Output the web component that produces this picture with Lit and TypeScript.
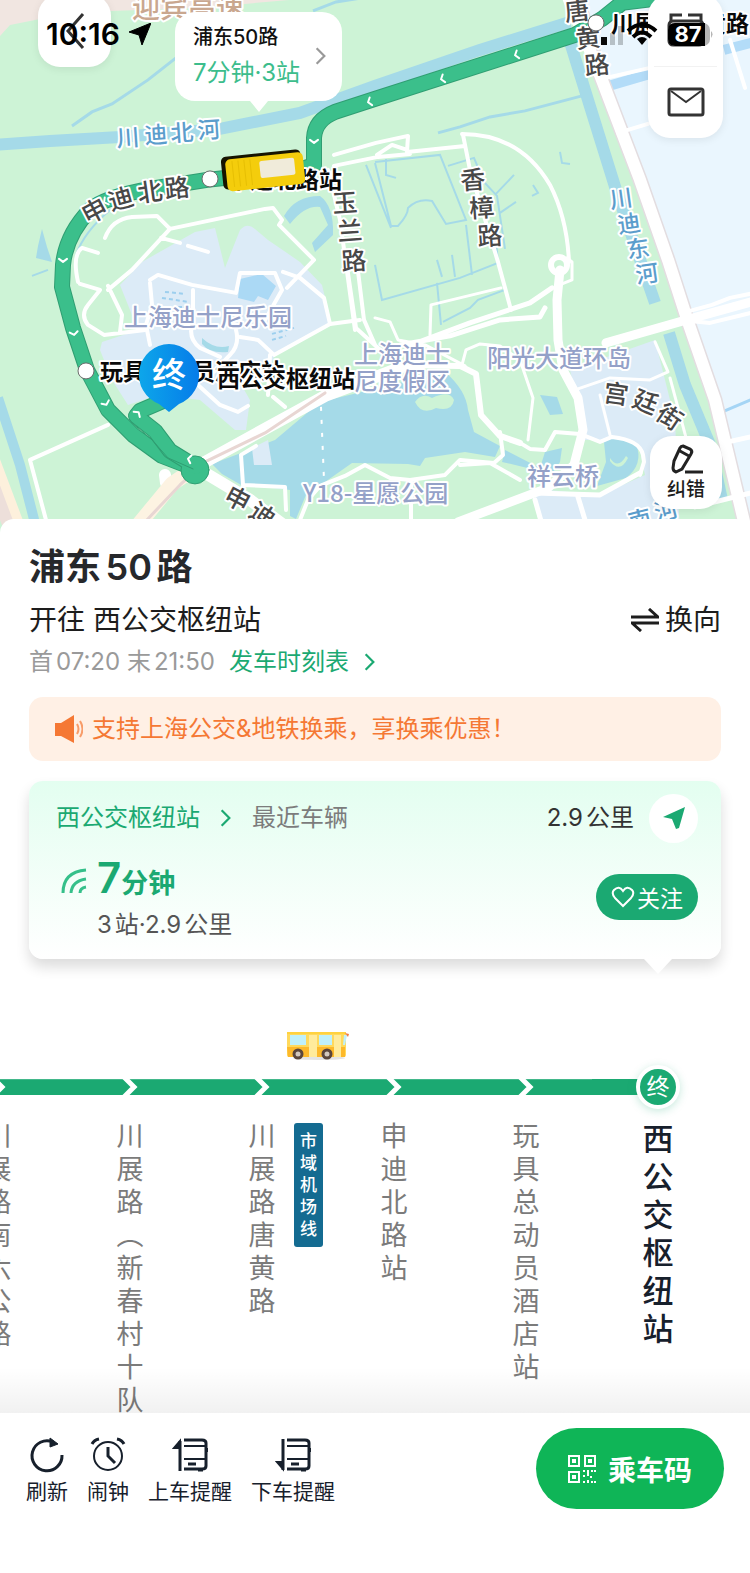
import { LitElement, html, svg, css } from "lit";
import { customElement, property } from "lit/decorators.js";

type Glyph = [string, number, number, number];

const streetGlyphs: Glyph[] = [
  ["申", 95, 212, -28], ["迪", 121, 200, -16], ["北", 150, 193, -8], ["路", 177, 189, -6],
  ["玉", 345, 204, -4], ["兰", 350, 232, -4], ["路", 354, 262, -4],
  ["香", 473, 181, -4], ["樟", 482, 209, -4], ["路", 490, 237, -4],
  ["唐", 577, 12, -6], ["黄", 588, 39, -6], ["路", 597, 66, -6],
  ["宫", 616, 395, 8], ["廷", 645, 403, 22], ["街", 669, 418, 34],
  ["申", 237, 500, 28], ["迪", 262, 516, 34],
];

const riverGlyphs: Glyph[] = [
  ["川", 128, 138, -4], ["迪", 156, 135, -4], ["北", 182, 133, -4], ["河", 209, 130, -4],
  ["川", 621, 199, -8], ["迪", 629, 224, -8], ["东", 638, 249, -8], ["河", 647, 274, -8],
  ["南", 640, 520, -14], ["河", 666, 511, -14],
];

const arrows: [number, number, number][] = [
  [442, 79, 72], [516, 55, 72], [369, 102, 72], [314, 142, 0], [63, 261, 0],
  [74, 334, -10], [106, 404, -25], [138, 413, 220], [189, 459, 100], [105, 202, 60],
];

const glyphs = (list: Glyph[], cls: string) =>
  list.map(([ch, x, y, r]) => svg`<text class=${cls} transform="translate(${x} ${y}) rotate(${r})" dy="8">${ch}</text>`);

const chevron = (w: number, h: number) => html`
  <svg class="chevron" width=${w} height=${h} viewBox="0 0 10 16" fill="none" stroke="currentColor" stroke-width="2"><path d="M1.5 1 8.5 8l-7 7" /></svg>`;

@customElement("route-map")
class RouteMap extends LitElement {
  static styles = css`
    :host { display: block; height: 100%; }
    svg { display: block; width: 100%; height: 100%; }
    text { font-family: "Noto Sans CJK SC", sans-serif; paint-order: stroke; stroke: #fff; stroke-width: 4px; stroke-linejoin: round; }
    .street { font-size: 25px; font-weight: 500; fill: #484848; text-anchor: middle; }
    .river { font-size: 23px; font-weight: 500; fill: #5b9dcc; text-anchor: middle; }
    .place { font-size: 24px; font-weight: 500; fill: #94a1c8; }
    .highway { font-size: 28px; font-weight: 500; fill: #c9a78f; }
    .stop { font-size: 23px; font-weight: 700; fill: #0a0a0a; }
    .end { font-size: 34px; font-weight: 500; fill: #fff; stroke: none; text-anchor: middle; }
    .water { fill: #a5dae8; }
    .stream { fill: none; stroke: #a5dae8; stroke-width: 2; }
    .land { fill: #cdf3d6; }
    .park { fill: #dcebf7; }
    .road { fill: none; stroke: #fff; stroke-linejoin: round; stroke-linecap: round; }
    .arrow { fill: none; stroke: #fff; stroke-width: 2; }
  `;

  render() {
    const route = "M760-14 622 3 602 19 575 35 375 99 335 112Q315 120 314 138V165L300 170 207 180 150 189Q105 197 90 210 66 235 63 265L62 287 73 328 87 370 108 410 133 435 162 456 193 468";
    const back = "M196 467 170 451 155 431 136 416 140 411 168 399";
    return html`<svg viewBox="0 0 750 535" preserveAspectRatio="xMidYMid slice" role="img" aria-label="浦东50路线路地图">
      <defs>
        <linearGradient id="pin" x1="0" x2="1"><stop offset="0" stop-color="#0da6ea" /><stop offset="1" stop-color="#067ce9" /></linearGradient>
      </defs>
      <rect class="land" width="750" height="535" />
      <path fill="#f1e6e1" d="M0 0H290L200 8 110 11 40 19 10 25 0 36Z" />
      <path fill="#eaf6fe" d="M585 0H750V535L668 258 597 80Z" />
      <path class="park" d="M120 285 142 262 195 232 215 228 225 268 240 230Q247 222 255 229L268 240 300 262 322 285 331 322 322 330 276 352 268 372 242 386 250 400 246 430 235 430 200 400 158 395 128 405 112 380 100 350 102 342 138 330Z" />
      <path class="park" d="M570 370 655 340 675 420 680 535H540L535 495 575 470 583 430Z" />
      <path class="land" d="M560 440 600 440 640 450 645 475 600 495 548 490Z" />

      <path class="water" d="M212 464 275 440 320 402 370 390 445 372Q466 390 468 410L474 432 500 446 495 457 465 452 425 458 420 466 408 464 352 463 325 482 308 490 296 519 290 516V490L250 485 243 486 222 474Z" />
      <path class="park" d="M252 448 268 440 272 465H254Z" />
      <path class="land" d="M415 402Q422 392 432 398 450 390 454 400 452 412 436 408 422 416 415 402Z" />
      <path class="water" d="M505 450 540 468 545 452 562 448 560 462 552 474 502 462Z" />
      <path class="water" d="M540 395 557 397 563 414 550 415Z" />
      <path class="water" d="M604 442Q620 432 636 444 644 464 626 478L597 486 606 462Z" />
      <path class="land" d="M610 458Q618 470 626 456L628 458Q620 474 610 461Z" />
      <path class="water" d="M284 216Q295 196 320 196 334 206 333 235L315 252 312 243 328 225 320 207Q305 205 290 224Z" />
      <path fill="#abd9f5" d="M240 279 262 274 276 286 268 300 258 296 254 302 238 298Z" />
      <path class="water" d="M202 338Q215 350 229 346L228 352Q210 354 202 344Z" />
      <path class="water" d="M42 229 47 247 52 262 36 258 38 246Z" />
      <path fill="none" stroke="#9dcfee" stroke-dasharray="4 3" stroke-width="2" d="M165 292 185 294M162 298 188 302M178 307H186M272 334 294 328M272 340 286 336" />

      <path fill="none" stroke="#a5dae8" stroke-width="12" d="M-5 145 50 141 120 137 220 129 300 113 375 86 480 50 570 22" />
      <path fill="none" stroke="#a5dae8" stroke-width="12" d="M570 42 588 100 616 190 655 303M669 333 685 385 710 445 722 500" />
      <path fill="none" stroke="#a5dae8" stroke-width="10" d="M-2 398 20 465 38 535" />
      <path fill="none" stroke="#b3dcf8" stroke-width="10" d="M609 86 650 74M724 50 755 42" />
      <path fill="none" stroke="#a5d5f5" stroke-width="3" d="M720 413 755 398" />
      <g class="stream">
        <path d="M72 126 92 112 112 104 148 80 176 58" stroke-width="3" /><path d="M313 11 336 2 362 -2" stroke-width="3" />
        <path d="M438 133 460 127 490 117 525 111 582 96" stroke-width="3" />
        <path d="M375 163 391 226 398 226Q408 215 408 208 418 198 432 201L446 224 466 220 440 155 375 162M448 166 474 158 484 182 497 196 505 249M495 195 514 175M500 213 516 202M366 165 391 228" />
        <path d="M375 265 382 300 460 278 498 263 495 230M437 283 441 325M443 322 470 308 478 300 505 290M437 260 442 277M452 255 455 277M466 225 472 275M386 159V175L396 178" />
        <path d="M560 152 562 163 570 164M533 185 538 193 532 196M32 276 48 270M76 255Q84 232 110 210" />
      </g>

      <path fill="none" stroke="#e3dde0" stroke-width="15" d="M572-20 600 75 640 180 668 260 688 322 715 400 746 530" />
      <g class="road">
        <path stroke-width="12" d="M565-10 600 75 640 180 668 260 688 322 715 400 746 530" />
        <path stroke-width="9" d="M606 343 690 319 755 301M560 270 557 300 558 340 563 370 578 398 583 430 574 465 548 488 458 522" />
        <path stroke-width="4" d="M690 311 712 305 730 298 755 293M690 321 710 323 755 312M618 133 648 124M606 78 650 68M730 40 745 88" />
        <path stroke-width="5" d="M535 493 600 495 640 473M695 507 755 492M535 500 545 535M578 497 585 520M728 442 755 436" />
        <circle cx="559" cy="265" r="8" stroke-width="6" /><path stroke-width="3" d="M567 258 572 262V280L562 284" />
        <path stroke-width="4" d="M334 155 376 143 408 136 407 152 465 146M334 166 378 157 410 154M377 155 392 145 407 150M462 134Q520 134 550 185 567 218 569 262M463 135 470 170 498 262 511 310M328 170 340 220 355 330" />
        <path stroke-width="5" d="M422 341 470 323 530 303 552 288M400 345 450 336 500 320 540 317 545 308" />
        <path stroke-width="3" d="M430 335 431 305 501 288M375 318 390 322 398 340 425 345 465 366M462 365 466 350 480 344 500 346 520 360 533 398 528 440" />
        <path stroke-width="6" d="M400 365 460 366 476 374 481 415 500 436 520 443" />
        <path stroke-width="4" d="M500 432 503 455 494 463 460 460 445 475 410 480 390 478 365 465 345 476 320 486 308 500 300 520M520 443 530 449 545 450 555 432 580 434 600 442 612 437Q640 440 643 455L644 462 640 475M460 465 490 463 520 480M411 482V535" />
        <path stroke-width="3" d="M575 390 610 378 650 380 668 372 655 342M600 395 610 435M670 378 700 490" />
        <path stroke-width="4" d="M105 238Q112 219 132 217L157 216 170 229 265 209 273 208 282 220 279 225 314 260M170 229 132 270 108 290M161 238 180 243M188 246 208 252M108 286 122 315 120 332M78 282Q72 255 82 248L98 253M80 284 100 290 88 305Q80 315 88 325L104 335 145 330M314 260 287 288M283 272 300 278 324 298 330 324M312 160 325 175" />
        <path stroke-width="4" d="M150 280 158 275 192 285 236 293 240 273 275 273 282 290 265 320M150 283 152 305 146 325 150 345M193 290V322Q187 338 200 348L220 357M236 330Q240 345 230 355L214 372M240 337 258 340 274 355 330 324 360 320M270 355 268 395 M198 385 220 405 238 412 248 406M273 397 285 407" />
        <path stroke-width="4" d="M346 260 356 328 400 368M356 255 364 320 375 345M30 460 108 425M30 460 50 535M243 485 241 455 256 446M243 485 285 487 286 510" />
        <path stroke-width="12" d="M205 462 325 396 400 368M165 475 166 483M200 470 250 500 290 530" />
        <path stroke="#fdf3e2" stroke-width="15" d="M130 535 172 484 200 465" />
        <path stroke="#e8d6d3" stroke-width="3" d="M145 522 180 485 205 462 265 433 325 393" />
        <path stroke="#fdf0dc" stroke-width="12" d="M-8 455 22 535" /><path stroke="#eddfda" stroke-width="12" d="M-16 460 12 535" />
        <path stroke-width="2" stroke-dasharray="4 9" stroke-linecap="butt" d="M321 407 324 480" />
      </g>

      <text class="highway" x="132" y="18">迎宾高速</text>
      <g class="road">
        <path stroke="#2f9e72" stroke-width="16" d=${route} /><path stroke="#3bbf8b" stroke-width="14" d=${route} />
        <path stroke="#2f9e72" stroke-width="16" d=${back} /><circle cx="195" cy="470" r="14" fill="#3bbf8b" stroke="#2f9e72" />
        <path stroke="#3bbf8b" stroke-width="14" d=${back} />
        <path stroke="#2f9e72" stroke-width="1" d="M131 422 152 440 168 458 193 469" />
        ${arrows.map(([x, y, r]) => svg`<path class="arrow" transform="translate(${x} ${y}) rotate(${r})" d="M-4-2 0 1 4-2" />`)}
      </g>

      ${glyphs(riverGlyphs, "river")} ${glyphs(streetGlyphs, "street")}
      <text class="place" x="124" y="326">上海迪士尼乐园</text>
      <text class="place" x="354" y="363">上海迪士</text>
      <text class="place" x="354" y="390">尼度假区</text>
      <text class="place" x="487" y="367">阳光大道环岛</text>
      <text class="place" x="527" y="485">祥云桥</text>
      <text class="place" x="303" y="502">Y18-星愿公园</text>

      <g fill="#fff" stroke="#6b6b6b" stroke-width="1">
        <circle cx="210" cy="179" r="8" /><circle cx="86" cy="371" r="8" /><circle cx="596" cy="23" r="8" />
      </g>
      <text class="stop" x="227" y="188">申迪北路站</text>
      <text class="stop" x="611" y="32">川展路唐黄路</text>
      <text class="stop" x="100" y="380">玩具总动员酒店站</text>
      <text class="stop" x="217" y="387">西公交枢纽站</text>

      <g transform="translate(263 170) rotate(-6)">
        <rect x="-41" y="-17" width="80" height="33" rx="5" fill="#161300" />
        <rect x="-37" y="-14" width="78" height="32" rx="5" fill="#f4cd0c" />
        <path stroke="#e6bf04" stroke-width="1" d="M-30-12V14M-24-12V14M-18-12V14M-12-12V14" />
        <rect x="-3" y="-9" width="35" height="17" rx="2" fill="#f0ebda" />
      </g>
      <path fill="url(#pin)" d="M169 344A31 31 0 0 1 179 404L169 412 159 404A31 31 0 0 1 169 344Z" />
      <text class="end" x="169" y="387">终</text>
    </svg>`;
  }
}

@customElement("station-stop")
class StationStop extends LitElement {
  @property() name = "";
  @property() line = "";
  @property({ type: Boolean }) terminal = false;
  @property({ type: Boolean }) bus = false;

  static styles = css`
    :host { position: relative; display: flex; flex: 0 0 132px; flex-direction: column; align-items: center; }
    .track { display: flex; align-items: center; justify-content: center; width: 100%; height: 16px; background: #1ba972; border-top: 1px solid #43b88b; box-sizing: border-box; }
    .mark { display: block; overflow: visible; }
    .track.terminal { background: linear-gradient(90deg, #1ba972 50%, transparent 50%); border-color: transparent; }
    .end { flex: none; width: 36px; height: 36px; border: 4px solid #fff; border-radius: 50%; background: #1ba972; color: #fff; font-size: 23px; line-height: 36px; text-align: center; box-shadow: 0 2px 8px #1ba97240; }
    .name { width: 28px; margin-top: 25px; font-size: 27px; line-height: 33px; color: #7b7b7b; line-break: anywhere; word-break: break-all; text-align: center; }
    .name.terminal { width: 32px; font-size: 31px; line-height: 38px; font-weight: 500; color: #17202c; }
    .line { position: absolute; top: 44px; left: 98px; box-sizing: border-box; width: 29px; padding: 7px 6px; border-radius: 3px; background: #146b91; color: #fff; font-size: 17px; line-height: 22px; font-weight: 500; line-break: anywhere; }
    .bus { position: absolute; top: -48px; left: 89px; }
  `;

  render() {
    const t = this.terminal ? "terminal" : "";
    return html`
      ${this.bus ? html`<svg class="bus" width="64" height="30" viewBox="0 0 64 30" aria-label="车辆位置">
        <ellipse cx="34" cy="27" rx="26" ry="2" fill="#e4e4e4" />
        <rect x="2" y="1" width="59" height="25" rx="2" fill="#ffd95c" /><path fill="#fdb92b" d="M2 16H60V26H3Z" />
        <path fill="#ffd23f" d="M2 1H61V3H2Z" />
        <path fill="#bff0fb" d="M5 4H21V14H5ZM34 4H47V14H34ZM59 4H62L60 14H58Z" />
        <path fill="#ffeb9c" d="M24 4H32V26H24ZM49 4H56V26H49Z" /><path fill="#f17a45" d="M60 2 64 3 63 6Z" />
        <g fill="#d3c8be" stroke="#5a463c" stroke-width="3"><circle cx="13" cy="23" r="4" /><circle cx="42" cy="23" r="4" /></g>
      </svg>` : ""}
      <div class="track ${t}">
        ${this.terminal ? html`<span class="end">终</span>` : html`<svg class="mark" width="18" height="16" viewBox="0 0 18 16" fill="none" stroke="#fff" stroke-width="5"><path d="M3-2 13 8 3 18" /></svg>`}
      </div>
      <div class="name ${t}">${this.name}</div>
      ${this.line ? html`<span class="line">${this.line}</span>` : ""}
    `;
  }
}

@customElement("app-root")
class AppRoot extends LitElement {
  static styles = css`
    :host { display: flex; flex-direction: column; height: 100vh; overflow: hidden; background: #fff; color: #1d1d1d; font-family: Inter, "Noto Sans CJK SC", sans-serif; text-autospace: normal; }
    button { padding: 0; border: 0; background: none; color: inherit; font: inherit; cursor: pointer; }
    a { color: inherit; text-decoration: none; }
    h1, p { margin: 0; }
    svg { display: block; flex: none; }

    .map { position: relative; flex: 0 0 34vh; overflow: hidden; }
    .float { position: absolute; display: flex; flex-direction: column; align-items: center; justify-content: center; background: #fff; border-radius: 22px; box-shadow: 0 2px 8px #00000014; }
    .back { top: -6px; left: 38px; width: 73px; height: 73px; }
    .tools { top: -6px; right: 27px; width: 75px; height: 144px; }
    .tools button { display: flex; flex: 1; align-items: center; justify-content: center; align-self: stretch; }
    .tools button + button { margin: 0 6px; border-top: 1px solid #f2f2f2; }
    .report { top: 436px; right: 28px; width: 72px; height: 73px; gap: 3px; font-size: 19px; line-height: 24px; font-weight: 500; }
    .bubble { position: absolute; top: 12px; left: 175px; display: flex; align-items: center; gap: 15px; padding: 8px 16px 10px 18px; border-radius: 20px; background: #fff; text-autospace: no-autospace; }
    .bubble::after, .card::after { content: ""; position: absolute; border: solid transparent; border-bottom: 0; border-top-color: #fff; }
    .bubble::after { top: 100%; left: 50%; border-width: 11px 9px 0; margin-left: -9px; }
    .bubble-text { display: flex; flex-direction: column; text-align: left; }
    .bubble-name { font-size: 20px; line-height: 34px; font-weight: 500; color: #111; }
    .bubble-eta { font-size: 24px; line-height: 37px; color: #3cbd8c; }
    .bubble .chevron { color: #999; }
    .status { position: absolute; top: 18px; left: 46px; right: 37px; display: flex; align-items: center; gap: 9px; height: 32px; color: #000; pointer-events: none; }
    .clock { font-size: 30px; font-weight: 600; }
    .status .system { margin-left: auto; }
    .level { font-size: 22px; font-weight: 700; fill: #fff; text-anchor: middle; font-family: Inter, sans-serif; }

    .sheet { position: relative; display: flex; flex: 1; flex-direction: column; min-height: 0; margin-top: -16px; padding-top: 26px; border-radius: 14px 14px 0 0; background: #fff; box-sizing: border-box; }
    .head { padding: 0 29px; }
    .title { font-size: 36px; line-height: 44px; font-weight: 600; color: #26282b; }
    .row { display: flex; align-items: center; }
    .bound { justify-content: space-between; margin-top: 9px; font-size: 28px; line-height: 44px; }
    .swap { display: flex; align-items: center; gap: 6px; }
    .hours { gap: 14px; margin-top: 2px; font-size: 24px; line-height: 36px; color: #9a9a9a; }
    .timetable { display: flex; align-items: center; gap: 15px; color: #1ba972; }
    .notice { gap: 9px; margin-top: 17px; padding: 0 26px; border-radius: 14px; background: #fff0e5; color: #f57834; font-size: 24px; line-height: 64px; white-space: nowrap; }
    .card { position: relative; display: flex; flex: none; flex-direction: column; margin: 20px 29px 0; padding: 13px 23px 18px 27px; border-radius: 14px; background: linear-gradient(#e3fef0, #fff); box-shadow: 0 8px 14px #00000024; }
    .card::after { top: 100%; right: 49px; border-width: 15px 14px 0; }
    .nearest { font-size: 24px; line-height: 36px; color: #7c7c7c; }
    .target { display: flex; align-items: center; gap: 20px; margin-right: 21px; color: #1ba972; }
    .distance { margin-left: auto; color: #333; }
    .locate { display: flex; align-items: center; justify-content: center; width: 49px; height: 49px; margin-left: 15px; border-radius: 50%; background: #fff; }
    .arrival { justify-content: space-between; margin-top: 11px; }
    .eta { display: grid; grid-template-columns: 26px auto; align-items: center; column-gap: 10px; padding-left: 5px; }
    .minutes { font-size: 27px; line-height: 48px; font-weight: 600; color: #1ba972; text-autospace: no-autospace; }
    .number { font-size: 42px; }
    .detail { grid-column: 2; font-size: 24px; line-height: 33px; color: #555; }
    .follow { display: flex; align-items: center; justify-content: center; gap: 2px; width: 102px; height: 46px; border-radius: 23px; background: #1ba972; color: #fff; font-size: 23px; }
    .strip { position: relative; display: flex; flex: 1; justify-content: flex-end; min-height: 0; overflow: hidden; padding: 120px 26px 0 0; }
    .strip::after { content: ""; position: absolute; inset: auto 0 0; height: 46px; background: linear-gradient(#0000, #0000000e); pointer-events: none; }

    .bar { display: flex; flex: 0 0 160px; align-items: flex-start; gap: 19px; padding: 15px 26px 0; box-sizing: border-box; background: #fff; color: #17202c; }
    .action { display: flex; flex-direction: column; align-items: center; gap: 3px; margin-top: 9px; font-size: 21px; line-height: 32px; white-space: nowrap; }
    .pay { display: flex; align-items: center; justify-content: center; gap: 12px; width: 188px; height: 81px; margin-left: auto; border-radius: 41px; background: #0fb557; color: #fff; font-size: 28px; font-weight: 600; }
  `;

  private stops = [
    { name: "川展路南六公路" },
    { name: "川展路︵新春村十队" },
    { name: "川展路唐黄路", line: "市域机场线", bus: true },
    { name: "申迪北路站" },
    { name: "玩具总动员酒店站" },
    { name: "西公交枢纽站", terminal: true },
  ];

  private busIcon(up: boolean) {
    return html`<svg width="36" height="36" viewBox="0 0 36 36" fill="none" stroke="currentColor" stroke-width="2">
      ${up ? svg`<path d="M8 34V4" stroke-width="3" /><path fill="currentColor" d="M8 4V11H2Z" />` : svg`<path d="M8 2V33" stroke-width="3" /><path fill="currentColor" d="M8 32V25H2Z" />`}
      <path d="M12 3H30Q34 3 34 6V29Q34 32 30 32H12" stroke-width="3" /><path d="M12 9H33M12 22H33" /><path d="M16 27H24M26 33H31M35 11V15" stroke-width="3" />
    </svg>`;
  }

  render() {
    return html`
      <section class="map">
        <route-map></route-map>
        <button class="bubble">
          <span class="bubble-text"><span class="bubble-name">浦东50路</span><span class="bubble-eta">7分钟·3站</span></span>
          ${chevron(11, 18)}
        </button>
        <button class="float back" aria-label="返回">
          <svg width="20" height="40" viewBox="0 0 20 40" fill="none" stroke="#333" stroke-width="3"><path d="M18 3 3 20l15 17" /></svg>
        </button>
        <div class="float tools">
          <button aria-label="公交卡"><svg width="38" height="34" viewBox="0 0 38 34" fill="none" stroke="#333" stroke-width="3"><rect x="2" y="8" width="34" height="24" rx="4" /><path d="M4 8V2H15M21 2H34V8" /></svg></button>
          <button aria-label="消息"><svg width="38" height="30" viewBox="0 0 38 30" fill="none" stroke="#333" stroke-width="3"><rect x="2" y="2" width="34" height="26" rx="2" /><path d="M4 4 19 15 34 4" stroke-width="2" /></svg></button>
        </div>
        <button class="float report">
          <svg width="34" height="32" viewBox="0 0 34 32" fill="none" stroke="#222" stroke-width="3"><path d="M14 3 21 6Q24 8 22 11L13 26 7 29Q4 28 4 25L5 18 11 5Q12 3 14 3ZM11 8 20 13" /><path d="M16 29H34" /></svg>
          纠错
        </button>
        <div class="status">
          <span class="clock">10:16</span>
          <svg width="22" height="22" viewBox="0 0 22 22"><path d="M22 0 0 9 10 12 13 22Z" stroke="#000" stroke-linejoin="round" /></svg>
          <svg class="system" width="112" height="30" viewBox="0 0 112 30">
            <path fill="#0a0a0a" d="M0 18H6V26H0Z" /><path fill="#00000038" d="M9 14H14V26H9ZM17 7H22V26H17Z" />
            <path fill="none" stroke="#000" stroke-width="4" d="M27 12Q41-1 55 12M32 18Q41 9 50 18" /><path d="M36 20Q41 16 46 20L41 26Z" />
            <rect x="67" y="4" width="42" height="23" rx="7" fill="#b5b5b5" /><path fill="#b5b5b5" d="M110 12Q113 15 110 19Z" />
            <path d="M74 4H104V27H74Q67 27 67 20V11Q67 4 74 4Z" />
            <text class="level" x="87" y="23">87</text>
          </svg>
        </div>
      </section>

      <main class="sheet">
        <header class="head">
          <h1 class="title">浦东50路</h1>
          <div class="row bound"><span>开往 西公交枢纽站</span>
            <button class="swap"><svg width="28" height="24" viewBox="0 0 28 24" fill="none" stroke="currentColor" stroke-width="3"><path d="M0 9H27L18 1M28 15H1L10 23" /></svg>换向</button>
          </div>
          <div class="row hours"><span>首07:20 末21:50</span><a class="timetable" href="#timetable">发车时刻表 ${chevron(11, 18)}</a></div>
          <p class="row notice">
            <svg width="28" height="28" viewBox="0 0 28 28" fill="currentColor"><path d="M0 8H6L19 0V28L6 21H0Z" /><path d="M22 9Q25 14 22 19M25 6Q30 14 25 22" fill="none" stroke="currentColor" stroke-width="2" opacity=".7" /></svg>
            支持上海公交&amp;地铁换乘，享换乘优惠！
          </p>
        </header>

        <section class="card">
          <div class="row nearest">
            <a class="target" href="#station">西公交枢纽站 ${chevron(11, 18)}</a><span>最近车辆</span>
            <span class="distance">2.9公里</span>
            <button class="locate" aria-label="导航"><svg width="24" height="24" viewBox="0 0 24 24" fill="#1ba972"><path d="M23 1 1 11 10 13 14 23 17 22Z" /></svg></button>
          </div>
          <div class="row arrival">
            <div class="eta">
              <svg width="26" height="26" viewBox="0 0 26 26" fill="none" stroke="#35c08a" stroke-width="3"><path d="M2 25Q2 4 25 2" /><path d="M10 25Q11 13 25 11" /><path d="M19 25Q19 20 25 19" /></svg>
              <span class="minutes"><span class="number">7</span>分钟</span>
              <span class="detail">3站·2.9公里</span>
            </div>
            <button class="follow"><svg width="24" height="22" viewBox="0 0 24 22" fill="none" stroke="#fff" stroke-width="2"><path d="M12 20 4 12Q0 7 3 4 8-1 12 5 16-1 21 4 24 7 20 12Z" /></svg>关注</button>
          </div>
        </section>

        <section class="strip" aria-label="站点">
          ${this.stops.map((s) => html`<station-stop .name=${s.name} .line=${s.line ?? ""} ?terminal=${s.terminal} ?bus=${s.bus}></station-stop>`)}
        </section>
      </main>

      <nav class="bar">
        <button class="action"><svg width="36" height="36" viewBox="0 0 36 36" fill="none" stroke="currentColor" stroke-width="3"><path d="M33 18A15 15 0 1 1 24 5" /><path fill="currentColor" stroke-width="1" d="M21 1 29 7 21 10Z" /></svg>刷新</button>
        <button class="action"><svg width="36" height="36" viewBox="0 0 36 36" fill="none" stroke="currentColor" stroke-width="3"><circle cx="18" cy="19" r="14" stroke-width="2" /><path d="M18 10V19L25 26" /><path d="M2 7Q4 3 9 2M34 7Q32 3 27 2" /></svg>闹钟</button>
        <button class="action">${this.busIcon(true)}上车提醒</button>
        <button class="action">${this.busIcon(false)}下车提醒</button>
        <button class="pay">
          <svg width="28" height="28" viewBox="0 0 28 28" fill="none" stroke="#fff" stroke-width="2"><path d="M1 1H11V11H1ZM17 1H27V11H17ZM1 17H11V27H1Z" /><path fill="#fff" stroke="none" d="M4 4H8V8H4ZM20 4H24V8H20ZM4 20H8V24H4ZM15 15H17V17H15ZM19 15H21V21H19ZM23 15H25V17H23ZM26 15H28V17H26ZM15 20H17V22H15ZM22 21H24V23H22ZM15 26H17V28H15ZM19 25H21V28H19ZM23 26H25V28H23ZM26 26H28V28H26Z" /></svg>
          乘车码
        </button>
      </nav>
    `;
  }
}
